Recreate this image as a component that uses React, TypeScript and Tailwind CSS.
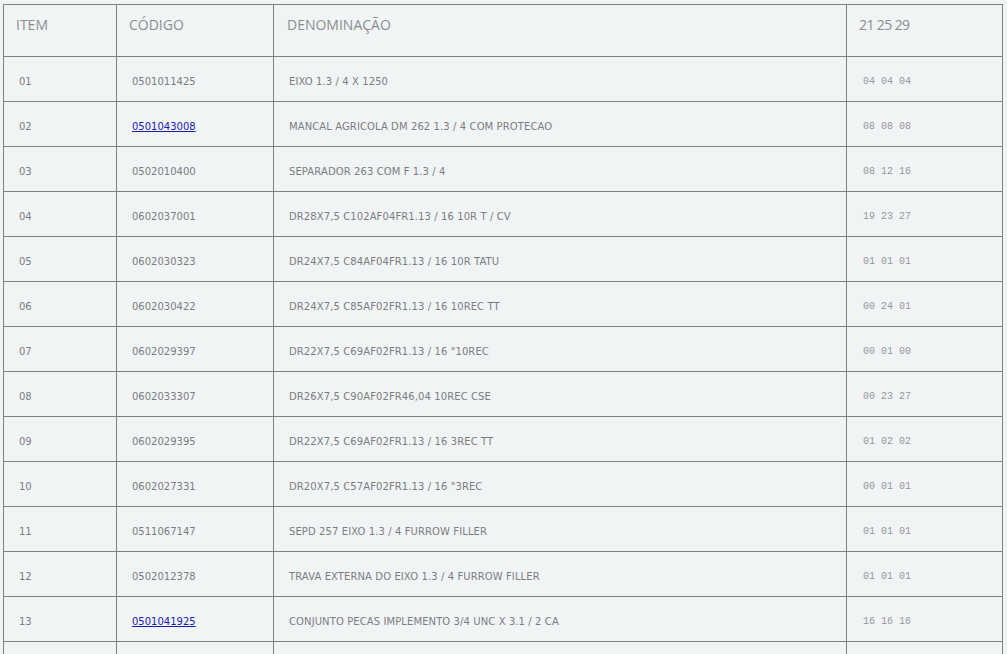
import React from "react";

const rows: { item: string; code: string; link?: boolean; den: string; q: string }[] = [
  { item: "01", code: "0501011425", den: "EIXO 1.3 / 4 X 1250", q: "04 04 04" },
  { item: "02", code: "0501043008", link: true, den: "MANCAL AGRICOLA DM 262 1.3 / 4 COM PROTECAO", q: "08 08 08" },
  { item: "03", code: "0502010400", den: "SEPARADOR 263 COM F 1.3 / 4", q: "08 12 16" },
  { item: "04", code: "0602037001", den: "DR28X7,5 C102AF04FR1.13 / 16 10R T / CV", q: "19 23 27" },
  { item: "05", code: "0602030323", den: "DR24X7,5 C84AF04FR1.13 / 16 10R TATU", q: "01 01 01" },
  { item: "06", code: "0602030422", den: "DR24X7,5 C85AF02FR1.13 / 16 10REC TT", q: "00 24 01" },
  { item: "07", code: "0602029397", den: "DR22X7,5 C69AF02FR1.13 / 16 \"10REC", q: "00 01 00" },
  { item: "08", code: "0602033307", den: "DR26X7,5 C90AF02FR46,04 10REC CSE", q: "00 23 27" },
  { item: "09", code: "0602029395", den: "DR22X7,5 C69AF02FR1.13 / 16 3REC TT", q: "01 02 02" },
  { item: "10", code: "0602027331", den: "DR20X7,5 C57AF02FR1.13 / 16 \"3REC", q: "00 01 01" },
  { item: "11", code: "0511067147", den: "SEPD 257 EIXO 1.3 / 4 FURROW FILLER", q: "01 01 01" },
  { item: "12", code: "0502012378", den: "TRAVA EXTERNA DO EIXO 1.3 / 4 FURROW FILLER", q: "01 01 01" },
  { item: "13", code: "0501041925", link: true, den: "CONJUNTO PECAS IMPLEMENTO 3/4 UNC X 3.1 / 2 CA", q: "16 16 16" },
  { item: "", code: "", den: "", q: "" },
];

const head = "border-r border-b border-[#7f8283] h-[52px] pt-[10px] text-[14px] leading-[20px] text-[#8a8d8f] [font-family:'Open_Sans',sans-serif]";
const cell = "border-r border-b border-[#7f8283] h-[45px] flex items-center text-[10px] text-[#7a7d7f] [font-family:'DejaVu_Sans',Verdana,sans-serif]";

export default function App() {
  return (
    <div className="h-[654px] overflow-hidden w-full bg-[#f1f4f5] pt-[4px] pl-[3px]">
      <div className="grid grid-cols-[113px_157px_573px_156px] w-[1000px] border-l border-t border-[#7f8283]">
        <div className={`${head} pl-[12px]`}>ITEM</div>
        <div className={`${head} pl-[12px]`}>CÓDIGO</div>
        <div className={`${head} pl-[13px]`}>DENOMINAÇÃO</div>
        <div className={`${head} pl-[12px] tracking-[-0.6px]`}>21 25 29</div>
        {rows.map((r, i) => (
          <React.Fragment key={i}>
            <div className={`${cell} pl-[15px] pt-[4px]`}>{r.item}</div>
            <div className={`${cell} pl-[15px] pt-[4px]`}>
              {r.link ? (
                <a href="#" className="text-[#1b1bb0] underline">{r.code}</a>
              ) : (
                r.code
              )}
            </div>
            <div className={`${cell} pl-[15px] pt-[4px] tracking-[0.1px]`}>{r.den}</div>
            <div className={`${cell} pl-[16px] pt-[5px]`}>
              <span className="text-[10px] text-[#94979a] [font-family:'Liberation_Mono',monospace]">{r.q}</span>
            </div>
          </React.Fragment>
        ))}
      </div>
    </div>
  );
}
